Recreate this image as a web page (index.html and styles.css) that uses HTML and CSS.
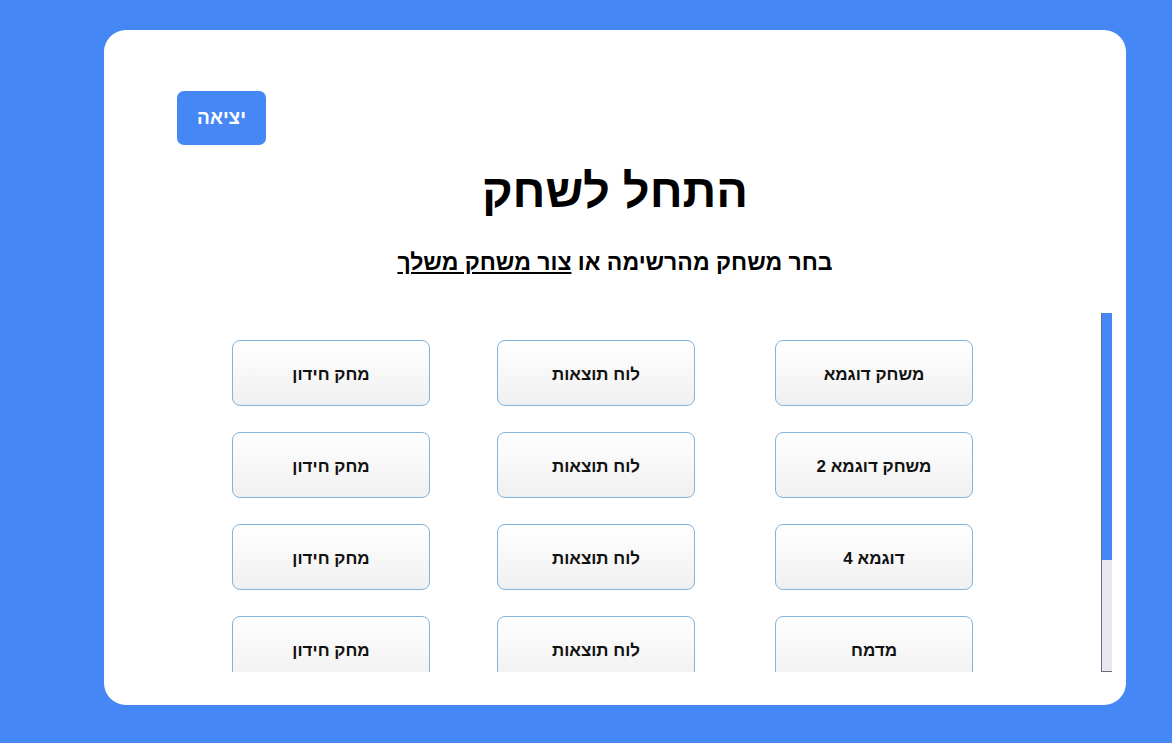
FILE: index.html
```html
<!DOCTYPE html>
<html lang="he" dir="rtl">
<head>
<meta charset="utf-8">
<title>התחל לשחק</title>
<link rel="stylesheet" href="styles.css">
</head>
<body>
<main class="card">
  <div class="top-row">
    <button class="exit-btn">יציאה</button>
  </div>
  <h1 class="title">התחל לשחק</h1>
  <p class="subtitle">בחר משחק מהרשימה או <a href="#" class="create-link">צור משחק משלך</a></p>
  <div class="games-area">
    <div class="scrollbar"><div class="scroll-thumb"></div></div>
    <div class="games-view">
      <div class="games-grid">
        <button class="game-btn">משחק דוגמא</button>
        <button class="game-btn">לוח תוצאות</button>
        <button class="game-btn">מחק חידון</button>
        <button class="game-btn">משחק דוגמא 2</button>
        <button class="game-btn">לוח תוצאות</button>
        <button class="game-btn">מחק חידון</button>
        <button class="game-btn">דוגמא 4</button>
        <button class="game-btn">לוח תוצאות</button>
        <button class="game-btn">מחק חידון</button>
        <button class="game-btn">מדמח</button>
        <button class="game-btn">לוח תוצאות</button>
        <button class="game-btn">מחק חידון</button>
      </div>
    </div>
  </div>
</main>
</body>
</html>
```
FILE: styles.css
```css
* { box-sizing: border-box; }
html, body { height: 100%; }
body {
  margin: 0;
  background: #4587f5;
  font-family: "Liberation Sans", Arial, sans-serif;
  padding: 30px 46px 38px 104px;
}
.card {
  background: #ffffff;
  border-radius: 22px;
  height: 675px;
  padding: 61px 14px 33px 14px;
  display: flex;
  flex-direction: column;
}
.top-row {
  display: flex;
  justify-content: flex-end;
  padding-left: 59px;
}
.exit-btn {
  width: 89px;
  height: 54px;
  border: none;
  border-radius: 7px;
  background: #4587f5;
  color: #ffffff;
  font-family: inherit;
  font-weight: bold;
  font-size: 19px;
  cursor: pointer;
}
.title {
  margin: 20px 0 0 0;
  text-align: center;
  font-size: 47px;
  line-height: 51px;
  font-weight: bold;
  color: #000;
}
.subtitle {
  margin: 34px 0 0 0;
  text-align: center;
  font-size: 23px;
  line-height: 24px;
  font-weight: bold;
  color: #000;
}
.create-link {
  color: #000;
  text-decoration: underline;
}
.games-area {
  margin-top: 39px;
  height: 359px;
  display: flex;
}
.scrollbar {
  width: 11px;
  flex: none;
  background: #e8e8f2;
  border-left: 1px solid #6d6d7a;
  border-bottom: 1px solid #6d6d7a;
}
.scroll-thumb {
  height: 247px;
  background: #4587f5;
}
.games-view {
  flex: 1;
  overflow: hidden;
}
.games-grid {
  display: grid;
  grid-template-columns: 278px 265px 198px;
  row-gap: 26px;
  justify-items: start;
  padding: 27px 128px 0 0;
}
.game-btn {
  width: 198px;
  height: 66px;
  padding: 4px 0 0 0;
  border: 1px solid #82b3db;
  border-radius: 8px;
  background: linear-gradient(#ffffff, #f0f0f0);
  font-family: inherit;
  font-weight: bold;
  font-size: 17px;
  color: #111;
  cursor: pointer;
}
```
